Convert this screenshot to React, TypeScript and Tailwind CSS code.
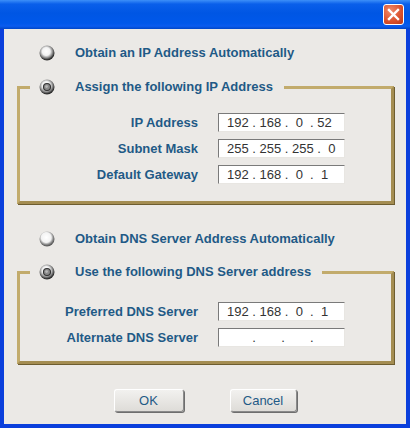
import { FC } from "react";

type RadioProps = { checked?: boolean; light?: boolean };

const Radio: FC<RadioProps> = ({ checked, light }) => (
  <svg width="16" height="16" viewBox="0 0 16 16" className="shrink-0">
    <defs>
      <radialGradient id={light ? "rgl" : "rgd"} cx="45%" cy="40%" r="55%">
        <stop offset="0" stopColor="#ffffff" />
        <stop offset={light ? "0.6" : "0.48"} stopColor="#f2f2f2" />
        <stop offset={light ? "0.84" : "0.76"} stopColor="#8e8e8e" />
        <stop offset="1" stopColor={light ? "#5e5e5e" : "#2e2e2e"} />
      </radialGradient>
    </defs>
    <circle cx="8" cy="8" r="7.5" fill={`url(#${light ? "rgl" : "rgd"})`} />
    {checked && (
      <>
        <circle cx="8" cy="8" r="3.5" fill="#8a8a8a" stroke="#333" strokeWidth="1.1" />
        <circle cx="7.6" cy="7.6" r="1.3" fill="#b8b8b8" />
      </>
    )}
  </svg>
);

const IpInput: FC<{ value: string }> = ({ value }) => (
  <div className="w-[127px] h-[19px] bg-white border border-t-[#7a7a7a] border-l-[#7a7a7a] border-b-[#e8e6e2] border-r-[#e8e6e2] flex items-center pl-[8px] text-[13px] text-[#333] whitespace-pre leading-none">
    {value}
  </div>
);

const Row: FC<{ label: string; value: string }> = ({ label, value }) => (
  <div className="flex items-center h-[19px]">
    <div className="w-[178px] text-right font-bold text-[13px] text-[#1f5a86]">{label}</div>
    <div className="ml-[20px]">
      <IpInput value={value} />
    </div>
  </div>
);

const Frame: FC<{ legend: string; children: React.ReactNode; pt: string; pb: string }> = ({
  legend,
  children,
  pt,
  pb,
}) => (
  <fieldset
    className={`ml-[13px] mr-[12px] px-0 border-[3px] border-t-[#c2ab6c] border-l-[#c2ab6c] border-b-[#a48d52] border-r-[#a48d52] shadow-[1px_1px_0_#6e5d30] ${pt} ${pb}`}
  >
    <legend className="ml-[10px] pl-[9px] pr-[11px] h-[16px] flex items-center">
      <Radio checked />
      <span className="ml-[20px] font-bold text-[13px] text-[#1f5a86]">{legend}</span>
    </legend>
    {children}
  </fieldset>
);

const App: FC = () => {
  return (
    <div
      className="w-[410px] h-[428px] flex flex-col bg-[#0a3fdc] overflow-hidden"
      style={{ fontFamily: '"Liberation Sans", Arial, sans-serif' }}
    >
      <div className="h-[29px] shrink-0 flex items-center justify-end pr-[6px] bg-[linear-gradient(to_bottom,#3d8ff8_0%,#0a5fea_14%,#0056e4_45%,#0058ea_80%,#0a5cef_90%,#0046c8_100%)]">
        <div className="w-[21px] h-[21px] rounded-[3px] border border-white bg-[radial-gradient(circle_at_35%_30%,#f08a6a,#d9502c_60%,#b8381a)] flex items-center justify-center">
          <svg width="13" height="13" viewBox="0 0 13 13">
            <path d="M2 2 L11 11 M11 2 L2 11" stroke="#fff" strokeWidth="2.4" strokeLinecap="square" />
          </svg>
        </div>
      </div>
      <div className="flex-1 mx-[4px] mb-[4px] bg-[#ebe9e6] flex flex-col">
        <div className="mt-[16px] h-[16px] flex items-center pl-[35px]">
          <Radio />
          <span className="ml-[20px] font-bold text-[13px] text-[#1f5a86]">
            Obtain an IP Address Automatically
          </span>
        </div>
        <div className="mt-[18px]">
          <Frame legend="Assign the following IP Address" pt="pt-[18px]" pb="pb-[17px]">
            <div className="flex flex-col gap-[7px]">
              <Row label="IP Address" value="192 . 168 .  0  . 52" />
              <Row label="Subnet Mask" value="255 . 255 . 255 .  0" />
              <Row label="Default Gateway" value="192 . 168 .  0  .  1" />
            </div>
          </Frame>
        </div>
        <div className="mt-[27px] h-[16px] flex items-center pl-[35px]">
          <Radio light />
          <span className="ml-[20px] font-bold text-[13px] text-[#1f5a86]">
            Obtain DNS Server Address Automatically
          </span>
        </div>
        <div className="mt-[17px]">
          <Frame legend="Use the following DNS Server address" pt="pt-[22px]" pb="pb-[14px]">
            <div className="flex flex-col gap-[7px]">
              <Row label="Preferred DNS Server" value="192 . 168 .  0  .  1" />
              <Row label="Alternate DNS Server" value="       .       .       ." />
            </div>
          </Frame>
        </div>
        <div className="mt-[25px] flex justify-center gap-[46px]">
          <button className="w-[70px] h-[23px] rounded-[3px] bg-[linear-gradient(to_bottom,#f2f1ef,#dedcd8)] border border-t-white border-l-white border-b-[#8a8a8a] border-r-[#8a8a8a] shadow-[1px_1px_0_#6e6e6e] text-[13px] text-[#1f5a86]">
            OK
          </button>
          <button className="w-[67px] h-[23px] rounded-[3px] bg-[linear-gradient(to_bottom,#f2f1ef,#dedcd8)] border border-t-white border-l-white border-b-[#8a8a8a] border-r-[#8a8a8a] shadow-[1px_1px_0_#6e6e6e] text-[13px] text-[#1f5a86]">
            Cancel
          </button>
        </div>
      </div>
    </div>
  );
};

export default App;
